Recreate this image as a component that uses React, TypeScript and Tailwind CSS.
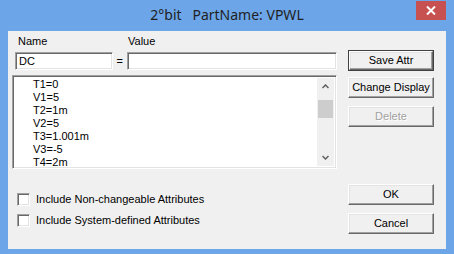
import React from "react";

const sunken =
  "border border-t-[#a0a0a0] border-l-[#a0a0a0] border-b-white border-r-white shadow-[inset_1px_1px_0_#696969,inset_-1px_-1px_0_#e3e3e3]";
const raised =
  "border border-t-white border-l-white border-b-[#696969] border-r-[#696969] shadow-[inset_-1px_-1px_0_#a0a0a0,inset_1px_1px_0_#e3e3e3]";

function Btn({ label, def, disabled, className = "" }: { label: string; def?: boolean; disabled?: boolean; className?: string }) {
  if (def) {
    return (
      <div className={`w-[86px] h-[21px] border border-[#404040] ${className}`}>
        <div className={`w-full h-full ${raised} flex items-center justify-center bg-[#f0f0f0]`}>
          <span className="text-[11px] leading-[13px] text-black">{label}</span>
        </div>
      </div>
    );
  }
  return (
    <div className={`w-[86px] h-[21px] ${raised} flex items-center justify-center bg-[#f0f0f0] ${className}`}>
      <span
        className={`text-[11px] leading-[13px] ${disabled ? "text-[#a0a0a0] [text-shadow:1px_1px_0_#ffffff]" : "text-black"}`}
      >
        {label}
      </span>
    </div>
  );
}

function Check({ label }: { label: string }) {
  return (
    <div className="flex items-center h-[13px]">
      <div className={`w-[13px] h-[13px] bg-white ${sunken}`} />
      <span className="ml-[6px] text-[11px] leading-[13px] text-black">{label}</span>
    </div>
  );
}

export default function App() {
  const items = ["T1=0", "V1=5", "T2=1m", "V2=5", "T3=1.001m", "V3=-5", "T4=2m"];
  return (
    <div
      className="w-[454px] h-[254px] bg-[#6ca6e8] flex flex-col overflow-hidden"
      style={{ fontFamily: '"Liberation Sans", Arial, sans-serif' }}
    >
      {/* title bar */}
      <div className="relative h-[31px] flex items-center justify-center">
        <span
          className="text-[14px] text-[#1f1f1f] pb-[3px] whitespace-pre"
          style={{ fontFamily: '"Noto Sans", "Open Sans", sans-serif' }}
        >
          {"2°bit   PartName: VPWL"}
        </span>
        <div className="absolute right-[8px] top-[1px] w-[30px] h-[19px] bg-[#c75050] flex items-center justify-center">
          <svg width="10" height="9" viewBox="0 0 10 9">
            <path d="M1 0.5 L9 8.5 M9 0.5 L1 8.5" stroke="white" strokeWidth="2" />
          </svg>
        </div>
      </div>

      {/* client */}
      <div className="mx-[8px] h-[218px] bg-[#f0f0f0] flex">
        {/* left column */}
        <div className="w-[332px] pl-[4px] pr-[3px] flex flex-col">
          <div className="h-[21px] flex items-start pt-[4px] text-[11px] leading-[13px] text-black">
            <span className="ml-[6px] w-[110px]">Name</span>
            <span>Value</span>
          </div>
          <div className="h-[18px] flex items-center">
            <div className={`ml-[3px] w-[98px] h-[18px] bg-white ${sunken} flex items-center pl-[3px]`}>
              <span className="text-[11px] leading-[13px] text-black">DC</span>
            </div>
            <span className="w-[14px] text-center text-[11px] leading-[13px] text-black">=</span>
            <div className={`w-[211px] h-[18px] bg-white ${sunken}`} />
          </div>
          <div className={`mt-[5px] w-[325px] h-[94px] bg-white ${sunken} flex p-[2px]`}>
            <div className="flex-1 pl-[18px] flex flex-col">
              {items.map((t) => (
                <div key={t} className="h-[13px] text-[11px] leading-[13px] text-black">
                  {t}
                </div>
              ))}
            </div>
            <div className="w-[17px] h-full bg-[#f0f0f0] flex flex-col">
              <div className="h-[17px] flex items-center justify-center">
                <svg width="7" height="5" viewBox="0 0 7 5">
                  <path d="M0.5 4 L3.5 1 L6.5 4" stroke="#606060" strokeWidth="1.5" fill="none" />
                </svg>
              </div>
              <div className="mt-[5px] mx-[1px] h-[18px] bg-[#cdcdcd]" />
              <div className="flex-1" />
              <div className="h-[17px] flex items-center justify-center">
                <svg width="7" height="5" viewBox="0 0 7 5">
                  <path d="M0.5 1 L3.5 4 L6.5 1" stroke="#606060" strokeWidth="1.5" fill="none" />
                </svg>
              </div>
            </div>
          </div>
          <div className="mt-[24px] ml-[5px] flex flex-col gap-[8px]">
            <Check label="Include Non-changeable Attributes" />
            <Check label="Include System-defined Attributes" />
          </div>
        </div>

        {/* right column */}
        <div className="ml-[8px] pt-[19px] flex flex-col">
          <Btn label="Save Attr" def />
          <Btn label="Change Display" className="mt-[6px]" />
          <Btn label="Delete" disabled className="mt-[8px]" />
          <Btn label="OK" className="mt-[57px]" />
          <Btn label="Cancel" className="mt-[8px]" />
        </div>
      </div>
      <div className="flex-1" />
    </div>
  );
}
